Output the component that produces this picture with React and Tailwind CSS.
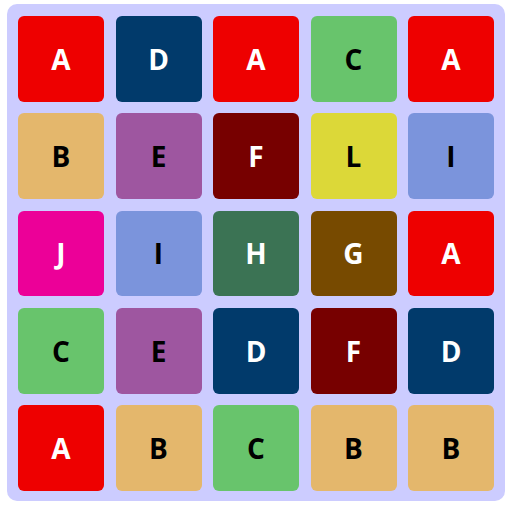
const COLORS = {
  A: "bg-[#ee0000] text-white",
  B: "bg-[#e4b76c] text-black",
  C: "bg-[#68c46c] text-black",
  D: "bg-[#013a6b] text-white",
  E: "bg-[#9e56a0] text-black",
  F: "bg-[#770000] text-white",
  G: "bg-[#774a00] text-white",
  H: "bg-[#3b7354] text-white",
  I: "bg-[#7b94dc] text-black",
  J: "bg-[#ec0098] text-white",
  L: "bg-[#dcd838] text-black",
};

const GRID = [
  "ADACA",
  "BEFLI",
  "JIHGA",
  "CEDFD",
  "ABCBB",
];

export default function App() {
  return (
    <div className="w-[512px] h-[512px] bg-white pt-[4px]">
      <div className="mx-auto w-[498px] h-[497px] bg-[#ccccff] rounded-[10px] pt-[12px] px-[11px] pb-[10px] grid grid-cols-5 gap-[11.5px]">
        {GRID.flatMap((row, r) =>
          row.split("").map((ch, c) => (
            <div
              key={`${r}-${c}`}
              className={`${COLORS[ch]} rounded-[6px] flex items-center justify-center font-bold text-[28px] font-['Open_Sans',sans-serif]`}
            >
              {ch}
            </div>
          ))
        )}
      </div>
    </div>
  );
}
